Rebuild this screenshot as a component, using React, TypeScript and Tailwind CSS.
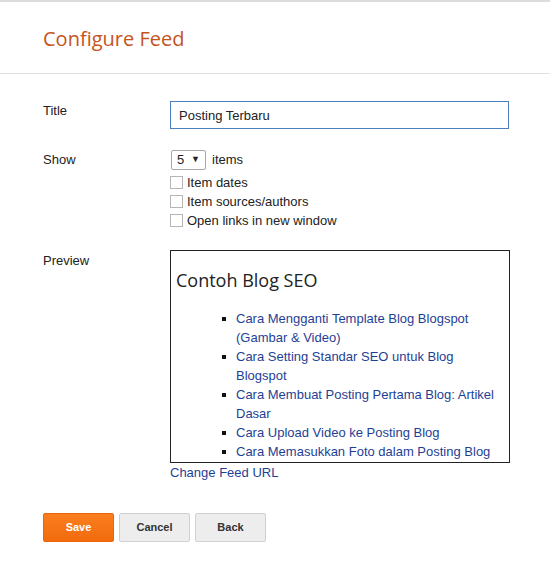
import React from "react";

const posts = [
  "Cara Mengganti Template Blog Blogspot (Gambar & Video)",
  "Cara Setting Standar SEO untuk Blog Blogspot",
  "Cara Membuat Posting Pertama Blog: Artikel Dasar",
  "Cara Upload Video ke Posting Blog",
  "Cara Memasukkan Foto dalam Posting Blog",
];

const options = ["Item dates", "Item sources/authors", "Open links in new window"];

export default function App() {
  return (
    <div className="min-h-[567px] w-[550px] border-t-2 border-[#dcdcdc] bg-white font-['Liberation_Sans',Arial,sans-serif] text-[13px] text-[#222]">
      <div className="border-b border-[#e2e2e2] px-[43px] pt-[24px] pb-[21px]">
        <h1 className="font-['Open_Sans',sans-serif] text-[20px] leading-[26px] text-[#c5541c]">
          Configure Feed
        </h1>
      </div>

      <div className="pt-[27px] pl-[43px]">
        <div className="flex">
          <div className="w-[127px] shrink-0">Title</div>
          <input
            defaultValue="Posting Terbaru"
            className="h-[28px] w-[339px] border border-[#4d7fc0] px-[8px] text-[13px] text-[#222] outline-none"
          />
        </div>

        <div className="mt-[21px] flex">
          <div className="w-[127px] shrink-0">Show</div>
          <div className="flex flex-col pl-[1px]">
            <div className="mb-[3px] flex items-center gap-[6px]">
              <div className="flex h-[20px] w-[35px] items-center justify-between rounded-[2px] border border-[#a8a8a8] pr-[5px] pl-[5px]">
                <span>5</span>
                <span className="text-[9px]">▼</span>
              </div>
              <span>items</span>
            </div>
            {options.map((o) => (
              <label key={o} className="flex h-[19px] items-center gap-[4px]">
                <span className="-ml-[1px] h-[13px] w-[13px] border border-[#b5b5b5] bg-white" />
                <span>{o}</span>
              </label>
            ))}
          </div>
        </div>

        <div className="mt-[20px] flex">
          <div className="w-[127px] shrink-0 pt-[1px]">Preview</div>
          <div className="flex flex-col">
            <div className="h-[213px] w-[340px] overflow-hidden border border-[#222]">
              <h2 className="mt-[17px] ml-[5px] font-['Open_Sans',sans-serif] text-[18px] leading-[24px] text-[#222]">
                Contoh Blog SEO
              </h2>
              <ul className="mt-[17px] pr-[8px] pl-[51px]">
                {posts.map((p) => (
                  <li key={p} className="flex leading-[19px]">
                    <span className="mt-[8px] mr-[10px] h-[4px] w-[4px] shrink-0 bg-[#111]" />
                    <a className="text-[#1f3f95]">{p}</a>
                  </li>
                ))}
              </ul>
            </div>
            <a className="mt-[2px] leading-[16px] text-[#1f3f95]">Change Feed URL</a>
          </div>
        </div>

        <div className="mt-[32px] flex gap-[5px]">
          <button className="h-[29px] w-[71px] rounded-[2px] border border-[#e8650d] bg-gradient-to-b from-[#fb7e1e] to-[#f26b0c] text-[11px] font-bold text-white">
            Save
          </button>
          <button className="h-[29px] w-[71px] rounded-[2px] border border-[#d0d0d0] bg-[#ededed] text-[11px] font-bold text-[#333]">
            Cancel
          </button>
          <button className="h-[29px] w-[71px] rounded-[2px] border border-[#d0d0d0] bg-[#ededed] text-[11px] font-bold text-[#333]">
            Back
          </button>
        </div>
      </div>
    </div>
  );
}
